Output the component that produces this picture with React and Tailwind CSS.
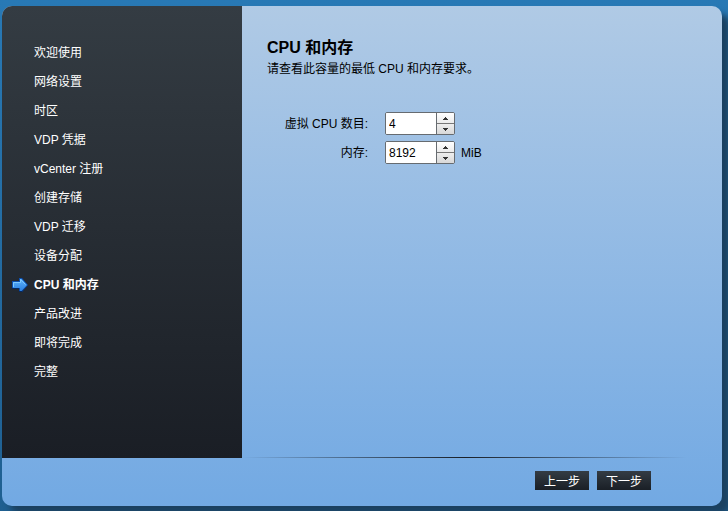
import { useState } from "react";

const steps = [
  "欢迎使用",
  "网络设置",
  "时区",
  "VDP 凭据",
  "vCenter 注册",
  "创建存储",
  "VDP 迁移",
  "设备分配",
  "CPU 和内存",
  "产品改进",
  "即将完成",
  "完整",
];

const current = 8;

function ArrowIcon() {
  return (
    <svg width="16" height="14" viewBox="0 0 16 14" aria-hidden="true">
      <defs>
        <linearGradient id="arrow-fill" x1="0" y1="0" x2="0" y2="1">
          <stop offset="0" stopColor="#5fb4fb" />
          <stop offset="1" stopColor="#2a7fe0" />
        </linearGradient>
      </defs>
      <path d="M0 3h7V0h3l6 7-6 7H7v-3H0z" fill="#0b4fb0" />
      <path d="M0 10h7v3h3l6-6-6 7H7v-3H0z" fill="#06285f" />
      <path d="M1 4h7V1h1.500l5.500 6-5.500 6H8v-3H1z" fill="url(#arrow-fill)" />
      <path d="M1.500 9V4.500h7v-3l5 5" fill="none" stroke="#7cc8ff" />
    </svg>
  );
}

function Spinner({ id, initial, step }) {
  const [value, setValue] = useState(initial);
  return (
    <div className="flex h-[23px] w-[70px] overflow-hidden rounded-[2px] border border-[#666b70] bg-white">
      <input
        id={id}
        type="text"
        inputMode="numeric"
        value={value}
        onChange={(e) => setValue(Number(e.target.value) || 0)}
        className="min-w-0 flex-1 bg-white pl-[3px] text-xs text-black outline-none"
      />
      <div className="flex w-[18px] flex-col border-l border-[#666b70]">
        <button
          type="button"
          aria-label="增加"
          onClick={() => setValue(value + step)}
          className="flex h-[11px] items-center justify-center border-b border-[#777] bg-linear-to-b from-white to-[#ececec]"
        >
          <svg width="5" height="3" viewBox="0 0 5 3" shapeRendering="crispEdges" aria-hidden="true">
            <path d="M2 0h1v1h1v1h1v1H0V2h1V1h1z" fill="#333" />
          </svg>
        </button>
        <button
          type="button"
          aria-label="减少"
          onClick={() => setValue(Math.max(0, value - step))}
          className="flex flex-1 items-center justify-center bg-linear-to-b from-[#eee] to-[#d8d8d8]"
        >
          <svg width="5" height="3" viewBox="0 0 5 3" shapeRendering="crispEdges" aria-hidden="true">
            <path d="M0 0h5v1H4v1H3v1H2V2H1V1H0z" fill="#333" />
          </svg>
        </button>
      </div>
    </div>
  );
}

function FooterButton({ children }) {
  return (
    <button
      type="button"
      className="flex h-[19px] w-[54px] items-center justify-center bg-linear-to-b from-[#343c44] to-[#1a1f26] pt-[3px] text-xs text-white"
    >
      {children}
    </button>
  );
}

export default function App() {
  return (
    <div className="flex min-h-screen flex-col bg-linear-to-b from-[#2879b5] to-[#1f5f90] pt-[6px] pr-[6px] pb-[5px] pl-[2px] font-['Liberation_Sans','Noto_Sans_CJK_SC',sans-serif] text-xs text-black">
      <div className="flex flex-1 flex-col overflow-hidden rounded-[10px] bg-linear-to-b from-[#b0cae5] to-[#72a9e3] shadow-[8px_8px_6px_#1b4160]">
        <div className="flex flex-1">
          <nav className="w-60 shrink-0 bg-linear-to-b from-[#343c43] to-[#1a1e25] pt-8 text-white">
            <ol>
              {steps.map((label, i) => (
                <li
                  key={label}
                  aria-current={i === current ? "step" : undefined}
                  className={
                    i === current
                      ? "flex h-[29px] items-center font-bold"
                      : "flex h-[29px] items-center"
                  }
                >
                  <span className="flex w-8 justify-center pl-1">
                    {i === current && <ArrowIcon />}
                  </span>
                  <span>{label}</span>
                </li>
              ))}
            </ol>
          </nav>
          <main className="flex-1 pt-8 pl-[25px]">
            <h1 className="text-base leading-5 font-bold">CPU 和内存</h1>
            <p className="leading-[22px]">请查看此容量的最低 CPU 和内存要求。</p>
            <form className="mt-8 flex flex-col gap-[6px]">
              <div className="flex items-center">
                <label htmlFor="cpu" className="w-[101px] text-right">
                  虚拟 CPU 数目:
                </label>
                <div className="pl-[17px]">
                  <Spinner id="cpu" initial={4} step={1} />
                </div>
              </div>
              <div className="flex items-center">
                <label htmlFor="memory" className="w-[101px] text-right">
                  内存:
                </label>
                <div className="pl-[17px]">
                  <Spinner id="memory" initial={8192} step={1024} />
                </div>
                <span className="pl-[6px]">MiB</span>
              </div>
            </form>
          </main>
        </div>
        <footer className="h-12">
          <div className="-mt-px mr-[35px] ml-60 h-px bg-linear-to-r from-transparent via-[#1a2028] to-transparent" />
          <div className="flex justify-end gap-2 pt-[13px] pr-[71px]">
            <FooterButton>上一步</FooterButton>
            <FooterButton>下一步</FooterButton>
          </div>
        </footer>
      </div>
    </div>
  );
}
